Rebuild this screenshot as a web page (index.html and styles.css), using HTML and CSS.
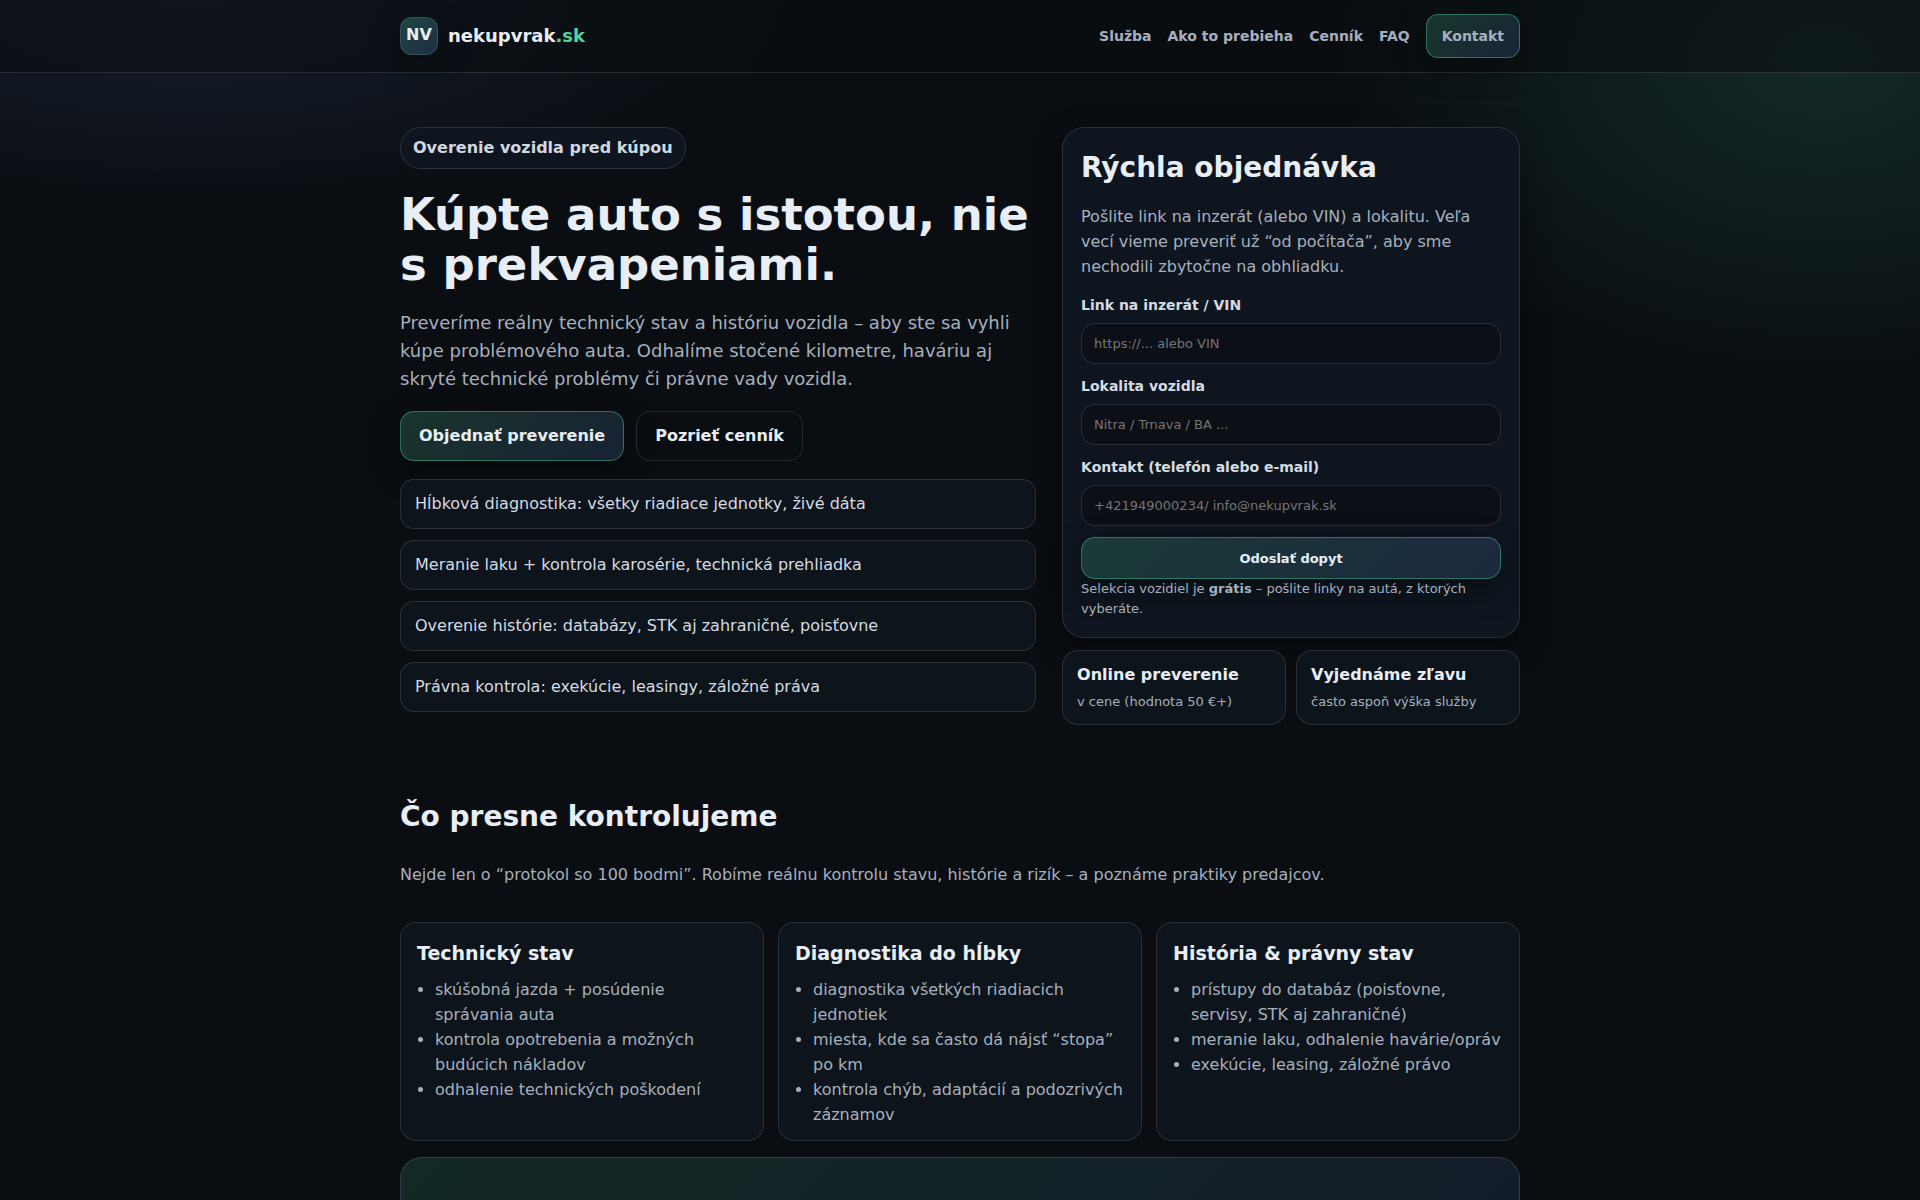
FILE: index.html
```html
<!DOCTYPE html>
<html lang="sk">
<head>
<meta charset="utf-8">
<meta name="viewport" content="width=device-width, initial-scale=1">
<title>nekupvrak.sk – Overenie vozidla pred kúpou</title>
<link rel="stylesheet" href="styles.css">
</head>
<body>
<header class="site-header">
  <div class="container header-inner">
    <a class="brand" href="#">
      <span class="brand-mark">NV</span>
      <span class="brand-name">nekupvrak<span class="accent">.sk</span></span>
    </a>
    <nav class="nav">
      <a href="#sluzba">Služba</a>
      <a href="#priebeh">Ako to prebieha</a>
      <a href="#cennik">Cenník</a>
      <a href="#faq">FAQ</a>
      <a class="nav-cta" href="#kontakt">Kontakt</a>
    </nav>
  </div>
</header>

<main class="container">
  <section class="hero">
    <div class="hero-copy">
      <span class="badge">Overenie vozidla pred kúpou</span>
      <h1>Kúpte auto s istotou, nie s prekvapeniami.</h1>
      <p class="lead">Preveríme reálny technický stav a históriu vozidla – aby ste sa vyhli kúpe problémového auta. Odhalíme stočené kilometre, haváriu aj skryté technické problémy či právne vady vozidla.</p>
      <div class="actions">
        <a class="btn btn-primary" href="#kontakt">Objednať preverenie</a>
        <a class="btn" href="#cennik">Pozrieť cenník</a>
      </div>
      <ul class="points">
        <li>Hĺbková diagnostika: všetky riadiace jednotky, živé dáta</li>
        <li>Meranie laku + kontrola karosérie, technická prehliadka</li>
        <li>Overenie histórie: databázy, STK aj zahraničné, poisťovne</li>
        <li>Právna kontrola: exekúcie, leasingy, záložné práva</li>
      </ul>
    </div>

    <div class="hero-side">
      <div class="order-card">
        <h2>Rýchla objednávka</h2>
        <p>Pošlite link na inzerát (alebo VIN) a lokalitu. Veľa vecí vieme preveriť už “od počítača”, aby sme nechodili zbytočne na obhliadku.</p>
        <form class="order-form">
          <div class="field">
            <label for="link">Link na inzerát / VIN</label>
            <input id="link" type="text" placeholder="https://... alebo VIN">
          </div>
          <div class="field">
            <label for="place">Lokalita vozidla</label>
            <input id="place" type="text" placeholder="Nitra / Trnava / BA ...">
          </div>
          <div class="field">
            <label for="contact">Kontakt (telefón alebo e-mail)</label>
            <input id="contact" type="text" placeholder="+421949000234/ info@nekupvrak.sk">
          </div>
          <button class="submit" type="submit">Odoslať dopyt</button>
        </form>
        <div class="note">Selekcia vozidiel je <strong>grátis</strong> – pošlite linky na autá, z ktorých vyberáte.</div>
      </div>
      <div class="minis">
        <div class="mini"><strong>Online preverenie</strong><span>v cene (hodnota 50 €+)</span></div>
        <div class="mini"><strong>Vyjednáme zľavu</strong><span>často aspoň výška služby</span></div>
      </div>
    </div>
  </section>

  <section class="checks" id="sluzba">
    <h2>Čo presne kontrolujeme</h2>
    <p class="checks-intro">Nejde len o “protokol so 100 bodmi”. Robíme reálnu kontrolu stavu, histórie a rizík – a poznáme praktiky predajcov.</p>
    <div class="check-grid">
      <article class="check-card">
        <h3>Technický stav</h3>
        <ul>
          <li>skúšobná jazda + posúdenie správania auta</li>
          <li>kontrola opotrebenia a možných budúcich nákladov</li>
          <li>odhalenie technických poškodení</li>
        </ul>
      </article>
      <article class="check-card">
        <h3>Diagnostika do hĺbky</h3>
        <ul>
          <li>diagnostika všetkých riadiacich jednotiek</li>
          <li>miesta, kde sa často dá nájsť “stopa” po km</li>
          <li>kontrola chýb, adaptácií a podozrivých záznamov</li>
        </ul>
      </article>
      <article class="check-card">
        <h3>História &amp; právny stav</h3>
        <ul>
          <li>prístupy do databáz (poisťovne, servisy, STK aj zahraničné)</li>
          <li>meranie laku, odhalenie havárie/opráv</li>
          <li>exekúcie, leasing, záložné právo</li>
        </ul>
      </article>
    </div>
    <div class="banner"></div>
  </section>
</main>
</body>
</html>
```
FILE: styles.css
```css
:root {
  --bg: #0a0d11;
  --text: #e8eef6;
  --muted: #a7b0be;
  --line: rgba(255, 255, 255, 0.12);
  --panel: #0d141b;
  --accent-line: rgba(77, 212, 157, 0.42);
  --accent-fill: linear-gradient(135deg, rgba(77, 212, 157, 0.2), rgba(80, 120, 190, 0.2));
  --shadow: 0 10px 30px rgba(0, 0, 0, 0.35);
}

* { box-sizing: border-box; }

body {
  margin: 0;
  min-height: 100vh;
  color: var(--text);
  font: 16px/25px "DejaVu Sans", sans-serif;
  background:
    radial-gradient(900px 600px at 95% 5%, rgba(77, 212, 157, 0.15), transparent 55%),
    radial-gradient(1000px 360px at 10% 0%, rgba(90, 130, 210, 0.15), transparent 60%),
    var(--bg);
  background-attachment: fixed;
}

h1, h2, h3, p, ul { margin: 0; }
a { color: inherit; text-decoration: none; }

.container {
  width: 100%;
  max-width: 1160px;
  margin: 0 auto;
  padding: 0 20px;
}

.site-header {
  background: rgba(10, 13, 17, 0.6);
  border-bottom: 1px solid var(--line);
}

.header-inner {
  display: flex;
  align-items: center;
  justify-content: space-between;
  padding-top: 14px;
  padding-bottom: 14px;
}

.brand { display: flex; align-items: center; gap: 10px; font-weight: 700; line-height: 24px; }

.brand-mark {
  display: grid;
  place-items: center;
  width: 38px;
  height: 38px;
  padding-bottom: 2px;
  border: 1px solid var(--line);
  border-radius: 12px;
  background: linear-gradient(135deg, rgba(77, 212, 157, 0.28), rgba(80, 120, 200, 0.28));
  box-shadow: var(--shadow);
}

.brand-name { font-size: 18px; }
.accent { color: #4fd6a0; }

.nav {
  display: flex;
  align-items: center;
  gap: 16px;
  color: var(--muted);
  font-size: 14px;
  line-height: 22px;
  font-weight: 700;
}

.nav-cta {
  padding: 10px 15px;
  border: 1px solid var(--accent-line);
  border-radius: 12px;
  background: var(--accent-fill);
  box-shadow: var(--shadow);
}

.hero {
  display: grid;
  grid-template-columns: 125fr 90fr;
  gap: 26px;
  padding: 54px 0 28px;
}

.badge {
  display: inline-block;
  padding: 8px 12px;
  border: 1px solid var(--line);
  border-radius: 22px;
  background: #0f151e;
  color: #d2d8e0;
  font-weight: 700;
  line-height: 24px;
}

h1 {
  margin-top: 21px;
  font-size: 45px;
  line-height: 50px;
}

.lead {
  margin-top: 19px;
  color: var(--muted);
  font-size: 18px;
  line-height: 28px;
}

.actions { display: flex; gap: 12px; margin-top: 18px; }

.btn {
  padding: 12px 18px;
  border: 1px solid var(--line);
  border-radius: 14px;
  font-weight: 700;
  line-height: 24px;
}

.btn-primary {
  border-color: var(--accent-line);
  background: var(--accent-fill);
  box-shadow: var(--shadow);
}

.points {
  display: grid;
  gap: 11px;
  margin-top: 18px;
  padding: 0;
  list-style: none;
}

.points li {
  padding: 12px 14px;
  border: 1px solid var(--line);
  border-radius: 14px;
  background: var(--panel);
  color: #d5dbe3;
  line-height: 24px;
}

.order-card {
  padding: 18px;
  border: 1px solid var(--line);
  border-radius: 22px;
  background: #0e151e;
  box-shadow: var(--shadow);
}

h2 { font-size: 28px; line-height: 43px; }

.order-card p { margin-top: 15px; color: var(--muted); }

.order-form { display: grid; gap: 11px; margin-top: 15px; }
.field { display: grid; gap: 7px; }

.field label {
  color: #d5dbe3;
  font-size: 14px;
  line-height: 22px;
  font-weight: 700;
}

.field input,
.submit {
  width: 100%;
  height: 41px;
  padding: 0 12px;
  border: 1px solid var(--line);
  border-radius: 14px;
  font-family: inherit;
  font-size: 13px;
}

.field input { background: #0c0f16; color: var(--text); }
.field input::placeholder { color: #757575; }

.submit {
  height: 42px;
  border-color: var(--accent-line);
  background: var(--accent-fill);
  box-shadow: var(--shadow);
  color: var(--text);
  font-weight: 700;
}

.note { color: var(--muted); font-size: 13px; line-height: 20px; }

.minis { display: grid; grid-template-columns: 1fr 1fr; gap: 10px; margin-top: 12px; }

.mini {
  display: grid;
  gap: 4px;
  padding: 12px 14px;
  border: 1px solid var(--line);
  border-radius: 16px;
  background: var(--panel);
}

.mini strong { line-height: 24px; }
.mini span { color: var(--muted); font-size: 13px; line-height: 21px; }

.checks { padding: 42px 0; }
.checks-intro { margin-top: 24px; color: var(--muted); }

.check-grid {
  display: grid;
  grid-template-columns: repeat(3, 1fr);
  gap: 14px;
  margin-top: 35px;
}

.check-card {
  padding: 16px 16px 13px;
  border: 1px solid var(--line);
  border-radius: 16px;
  background: var(--panel);
}

.check-card h3 { font-size: 19px; line-height: 29px; }
.check-card ul { margin-top: 9px; padding-left: 18px; color: var(--muted); }

.banner {
  min-height: 160px;
  margin-top: 16px;
  border: 1px solid var(--line);
  border-radius: 22px;
  background: linear-gradient(135deg, rgba(77, 212, 157, 0.14), rgba(80, 120, 200, 0.14));
}

@media (max-width: 900px) {
  .hero, .check-grid { grid-template-columns: 1fr; }
}
```
